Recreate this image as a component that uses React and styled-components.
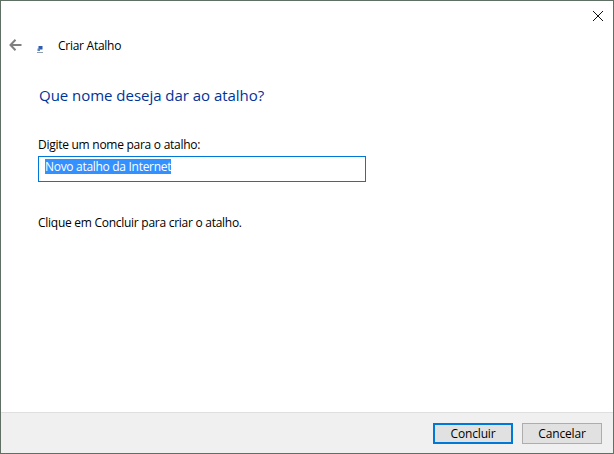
import React from 'react'
import styled, { createGlobalStyle } from 'styled-components'

const Global = createGlobalStyle`
  html, body {
    margin: 0;
    padding: 0;
    background: #fff;
  }
  * {
    box-sizing: border-box;
  }
`

const App = () => {
  return (
    <Window>
      <Global />
      <CloseRow>
        <CloseButton aria-label="Fechar">
          <svg width="12" height="12" viewBox="0 0 12 12">
            <path d="M1 1 L11 11 M11 1 L1 11" stroke="#111" strokeWidth="1" fill="none" />
          </svg>
        </CloseButton>
      </CloseRow>
      <NavBar>
        <BackButton aria-label="Voltar">
          <svg width="13" height="12" viewBox="0 0 13 12">
            <path d="M6.5 0.8 L1.5 6 L6.5 11.2 M1.5 6 L12.5 6" stroke="#808080" strokeWidth="2" fill="none" />
          </svg>
        </BackButton>
        <WizardIcon>
          <svg width="6" height="7" viewBox="0 0 6 7">
            <rect x="1.5" y="0" width="4" height="3.5" fill="#2a5db0" />
            <rect x="0.5" y="2.5" width="2.5" height="2.5" fill="#5c83c0" />
            <path d="M0 6.5 H6" stroke="#8f9cab" strokeWidth="1" />
          </svg>
        </WizardIcon>
        <WizardTitle>Criar Atalho</WizardTitle>
      </NavBar>
      <Content>
        <Heading>Que nome deseja dar ao atalho?</Heading>
        <Label htmlFor="nome">Digite um nome para o atalho:</Label>
        <NameInput id="nome">
          <Selected>Novo atalho da Internet</Selected>
        </NameInput>
        <Hint>Clique em Concluir para criar o atalho.</Hint>
      </Content>
      <Footer>
        <Button $primary>Concluir</Button>
        <Button>Cancelar</Button>
      </Footer>
    </Window>
  )
}

export default App

const Window = styled.div`
  width: 614px;
  height: 454px;
  display: flex;
  flex-direction: column;
  border: 1px solid #5f6f64;
  background: #fff;
  font-family: 'Open Sans', 'Noto Sans', sans-serif;
  font-size: 12px;
  letter-spacing: -0.27px;
  color: #000;
`

const CloseRow = styled.div`
  height: 29px;
  display: flex;
  justify-content: flex-end;
  align-items: flex-start;
`

const CloseButton = styled.div`
  width: 30px;
  height: 29px;
  display: flex;
  align-items: center;
  justify-content: center;
`

const NavBar = styled.div`
  height: 30px;
  display: flex;
  align-items: center;
  padding-left: 8px;
`

const BackButton = styled.div`
  width: 13px;
  height: 12px;
  display: flex;
  margin-right: 15px;
`

const WizardIcon = styled.div`
  width: 6px;
  height: 7px;
  display: flex;
  margin-top: 9px;
  margin-right: 15px;
`

const WizardTitle = styled.span`
  letter-spacing: -0.27px;
`

const Content = styled.div`
  flex: 1;
  display: flex;
  flex-direction: column;
  align-items: flex-start;
  padding: 25px 0 0 37px;
`

const Heading = styled.h1`
  margin: 0 0 0 1px;
  font-size: 15px;
  line-height: 20px;
  font-weight: 400;
  letter-spacing: -0.03px;
  color: #003399;
`

const Label = styled.label`
  margin-top: 31px;
  line-height: 17px;
`

const NameInput = styled.div`
  width: 328px;
  height: 26px;
  margin-top: 3px;
  display: flex;
  align-items: center;
  padding: 0 0 5px 6px;
  border: 1px solid #0078d7;
`

const Selected = styled.span`
  background: #3390ff;
  color: #fff;
  line-height: 15px;
  letter-spacing: -0.3px;
`

const Hint = styled.p`
  margin: 32px 0 0;
  line-height: 17px;
`

const Footer = styled.div`
  height: 41px;
  display: flex;
  justify-content: flex-end;
  gap: 9px;
  padding: 10px 11px 0 0;
  border-top: 1px solid #dfdfdf;
  background: #f0f0f0;
  letter-spacing: -0.15px;
`

const Button = styled.div`
  width: 80px;
  height: 21px;
  display: flex;
  align-items: center;
  justify-content: center;
  background: #e1e1e1;
  border: ${(p) => (p.$primary ? '2px solid #0078d7' : '1px solid #adadad')};
`
